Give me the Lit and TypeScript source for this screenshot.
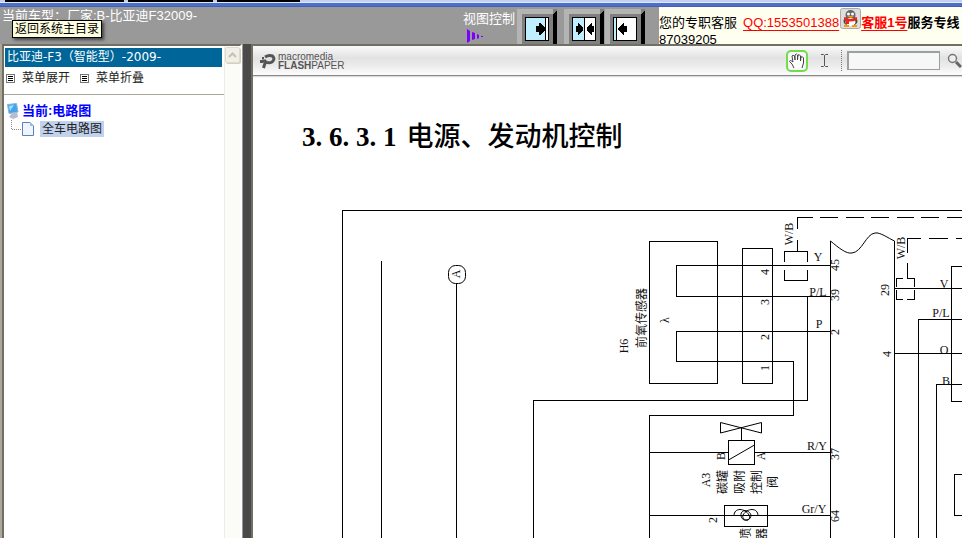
import { LitElement, html, svg, css } from "lit";
import { customElement } from "lit/decorators.js";

@customElement("fp-diagram")
class FpDiagram extends LitElement {
  static styles = css`
    :host { display: block; }
    svg { display: block; overflow: visible; }
    .wire { fill: none; stroke: #000; stroke-width: 1; shape-rendering: crispEdges; }
    .curve { fill: none; stroke: #000; stroke-width: 1; }
    text { font-family: "Liberation Serif", "Noto Sans CJK SC", serif; font-size: 12px; fill: #111; text-anchor: middle; }
    .cn { font-family: "Noto Sans CJK SC", sans-serif; font-size: 12px; }
  `;

  private up(x: number, y: number, label: string, cls = "") {
    return svg`<text class=${cls} transform="translate(${x} ${y}) rotate(-90)">${label}</text>`;
  }

  render() {
    return html`<svg width="709" height="462" viewBox="253 76 709 462" role="img" aria-label="电路图">
      <path class="wire" d="M342.5 538V210.5H962 M381.5 261V538 M456.5 284V538 M533.5 538V400.5H807.5V296
        M649.5 241.5H717.5V383.5H649.5Z M742.5 248.5H772.5V383.5H742.5Z
        M830 265.5H676.5V296.5H830 M830 331.5H676.5V361.5H793.5V415.5H649.5V538
        M797.5 251V240 M797.5 229V217.5H813 M820 217.5H838 M846 217.5H864 M871 217.5H889 M897 217.5H914 M921 217.5H939 M947 217.5H962
        M784.5 262V251.5H807.5V262 M784.5 270V280.5H807.5V270
        M830.5 241V538 M894.5 241V538 M894 288.5H962 M894 353.5H962
        M907.5 278V263 M907.5 253V238.5H921 M929 238.5H948 M956 238.5H962
        M896.5 287V278.5H903 M907 278.5H914.5V287 M896.5 290V299.5H903 M907 299.5H914.5V290
        M962 266.5H951.5V401.5H962 M918.5 538V319.5H962 M936.5 538V384.5H962 M962 474.5H954.5V515.5H962
        M649 452.5H728 M755 452.5H830 M728.5 440.5H754.5V464.5H728.5Z M741.5 440V428
        M649 515.5H830 M724.5 505.5H767.5V526.5H724.5Z" />
      <path class="curve" d="M830.5 241C839 248 846 254 852 253C862 252 866 234 875 233C880 232 888 238 894.5 241
        M720.5 422.5L761.5 433V422.5L720.5 433Z M728.5 460L754.5 445" />
      <path class="curve" stroke-width="1.3" d="M734 516C734 507 745 508 749 515C752 522 742 522 741 516C740 509 749 509 751 515C751 522 741 521 743 515C747 508 758 507 758 516" />
      <rect class="curve" x="448.5" y="265.5" width="17" height="18" rx="7" />
      ${this.up(460, 274, "A")}
      ${this.up(628, 346, "H6")}${this.up(646, 318, "前氧传感器", "cn")}${this.up(669, 320, "λ")}
      ${this.up(769, 272, "4")}${this.up(769, 302, "3")}${this.up(769, 337, "2")}${this.up(769, 368, "1")}
      ${this.up(793, 234, "W/B")}${this.up(905, 248, "W/B")}
      ${this.up(839, 265, "45")}${this.up(839, 295, "39")}${this.up(839, 332, "2")}
      ${this.up(889, 290, "29")}${this.up(891, 354, "4")}
      ${this.up(839, 454, "37")}${this.up(839, 516, "64")}
      ${this.up(725, 456, "B")}${this.up(765, 456, "A")}${this.up(710, 480, "A3")}
      ${this.up(727, 482, "碳罐", "cn")}${this.up(744, 482, "吸附", "cn")}${this.up(761, 482, "控制", "cn")}${this.up(777, 482, "阀", "cn")}
      ${this.up(717, 520, "2")}${this.up(750, 534, "喷", "cn")}${this.up(766, 534, "器", "cn")}
      <text x="818" y="261">Y</text><text x="818" y="296">P/L</text><text x="819" y="328">P</text>
      <text x="944" y="288">V</text><text x="941" y="317">P/L</text><text x="944" y="354">O</text><text x="946" y="385">B</text>
      <text x="817" y="450">R/Y</text><text x="814" y="513">Gr/Y</text>
    </svg>`;
  }
}

@customElement("app-root")
class AppRoot extends LitElement {
  static styles = css`
    :host { display: flex; flex-direction: column; height: 100vh; overflow: hidden; background: #999; font: 12px/16px "Liberation Sans", "Noto Sans CJK SC", sans-serif; color: #000; }
    * { box-sizing: border-box; }
    button { border: 0; padding: 0; background: none; font: inherit; color: inherit; }
    svg { display: block; flex: none; }
    .strip { flex: none; height: 7px; background: linear-gradient(#c4d0f0 0 2px, #e3e9fa 2px 3px, #4c70c8 3px 6px, #3f62b8 6px); position: relative; }
    .tabs { display: flex; gap: 4px; height: 2px; padding-left: 5px; }
    .tabs i { background: #000; }
    .t1 { width: 119px; }
    .t2 { width: 85px; }
    .t3 { width: 83px; }
    .head { flex: none; height: 37px; display: flex; overflow: hidden; background: #999; font-size: 13px; }
    .car { flex: 1; min-width: 0; padding: 1px 0 0 2px; color: #fff; white-space: nowrap; }
    .tip { position: absolute; left: 12px; top: 20px; height: 18px; padding: 0 2px; border: 1px solid #000; background: #ffffe1; box-shadow: 2px 2px 3px #444; white-space: nowrap; z-index: 2; }
    .control { flex: none; width: 54px; color: #fff; padding-top: 4px; white-space: nowrap; }
    .control svg { margin-top: 2px; margin-left: 4px; }
    .views { flex: none; display: flex; gap: 6px; padding-top: 2px; width: 142px; }
    .pair { display: flex; }
    .contact { flex: none; width: 303px; background: #fffff0; overflow: hidden; white-space: nowrap; }
    .line { display: flex; height: 25px; align-items: flex-end; line-height: 18px; }
    .line svg { align-self: flex-start; margin-top: 1px; }
    .line a { color: #f00; text-decoration: underline; text-underline-offset: 3px; }
    .line a:first-of-type { margin: 0 1px 0 6px; }
    .bold { font-weight: bold; }
    .main { flex: 1; min-height: 0; display: flex; background: #aca899; }
    .side { flex: none; width: 240px; margin-left: 2px; display: flex; background: #fff; border: 2px solid #716f64; border-color: #716f64 #fff #fff #716f64; border-bottom: 0; }
    .nav { flex: 1; min-width: 0; }
    .title { margin: 2px 2px 0 1px; height: 19px; line-height: 19px; padding-left: 2px; background: #069; color: #fff; font-family: "DejaVu Sans", "Noto Sans CJK SC", sans-serif; white-space: nowrap; }
    .tools { display: flex; gap: 10px; height: 28px; padding: 3px 2px 0; border-bottom: 1px solid #aca899; color: #222; }
    .tools button { display: flex; gap: 7px; height: 16px; align-items: center; }
    .tree { padding: 7px 3px; }
    .node { display: flex; gap: 3px; height: 18px; align-items: center; font-weight: bold; font-size: 13px; }
    .node a { color: #00f; text-decoration: none; }
    .leaf { display: flex; height: 18px; align-items: center; gap: 6px; }
    .leaf a { background: #c1d2ee; color: #222; padding: 0 2px; text-decoration: none; }
    .scroll { flex: none; width: 16px; background: #fbfbf7; border-left: 1px solid #eeede5; }
    .scroll button { display: flex; align-items: center; justify-content: center; width: 15px; height: 16px; margin-top: 1px; border: 1px solid #dedbcd; border-radius: 2px; background: #f1f0e8; box-shadow: 1px 1px 0 #d3d0c2; }
    .divider { flex: none; width: 9px; background: #4a4a4a; border-left: 1px solid #999; }
    .paper { flex: 1; min-width: 0; background: #fff; border: solid #716f64; border-width: 2px 0 0 2px; overflow: hidden; }
    .bar { display: flex; align-items: center; height: 30px; padding-left: 7px; background: linear-gradient(#fafafa, #e2e2e2 12px, #ececec 20px, #fdfdfd); border-bottom: 1px solid #888; box-shadow: 0 1px 1px #ddd; }
    .brand { margin-left: 2px; color: #555; line-height: 9px; flex: 1; font-size: 10px; font-family: "Liberation Sans", sans-serif; white-space: nowrap; }
    .hand { width: 22px; height: 22px; border: 2px solid #72dc4a; border-radius: 5px; background: #f7f7f7; display: flex; justify-content: center; align-items: center; }
    .cursor { margin: 0 12px; }
    .dots { border-left: 1px dotted #777; height: 21px; margin-right: 5px; }
    input { width: 93px; height: 19px; border: 2px solid #99a0a0; border-right-width: 1px; border-bottom-width: 1px; background: #f7f7f7; padding: 0 3px; margin-right: 7px; }
    .page { display: grid; }
    .page h1, .page fp-diagram { grid-area: 1 / 1; }
    h1 { margin: 0; padding: 44px 0 0 49px; font: 500 27px/34px "Liberation Serif", "Noto Sans CJK SC", serif; white-space: nowrap; display: flex; gap: 10px; align-self: start; }
    .num { font-weight: bold; font-size: 27px; }
  `;

  private view(kind: string) {
    const split = kind === "right" ? 20 : kind === "both" ? 12 : 3;
    return html`<button aria-label=${kind}><svg width="41" height="36" viewBox="0 0 41 36" shape-rendering="crispEdges">
      <path fill="#b4b4b4" d="M0 0H40V36H0Z" /><path fill="#808080" d="M5 5H36V36H5Z" />
      <path fill="#000" d="M36 5L40 1V36H36Z" /><path fill="#808080" d="M36 0H40V1L36 5Z" />
      <path fill="#fff" stroke="#000" d="M8.5 8.5H31.5V31.5H8.5Z" /><path fill="#bfefff" d="M9 9H${9 + split - 1}V31H9Z" />
      <path stroke="#000" d="M${8.5 + split} 9V31" />
      ${kind === "right" ? svg`<path d="M19 17H22V14H23L28 19V21L23 26H22V23H19Z" />` : kind === "both" ? svg`<path d="M12 17H14V14H15L19 19V21L15 26H14V23H12Z M30 17H28V14H27L23 19V21L27 26H28V23H30Z" />` : svg`<path d="M22 17H19V14H18L13 19V21L18 26H19V23H22Z" />`}
    </svg></button>`;
  }

  render() {
    const box = html`<svg width="9" height="9" viewBox="0 0 9 9" shape-rendering="crispEdges"><path fill="#fff" stroke="#777" d="M.5 .5H8.5V8.5H.5Z" /><path stroke="#000" d="M2 2.5H7M2 4.5H7M2 6.5H7" /></svg>`;
    return html`
      <div class="strip"><div class="tabs"><i class="t1"></i><i class="t2"></i><i class="t3"></i></div><div class="tip">返回系统主目录</div></div>
      <header class="head">
        <div class="car">当前车型：厂家:B-比亚迪F32009-</div>
        <div class="control">视图控制<svg width="18" height="14" viewBox="0 0 18 14"><path fill="#7d00ff" d="M0 0L3 2V12L0 14Z M5 3L8 4V10L5 11Z M10 5L12 6V9L10 10Z M14 7H16V8H14Z" /></svg></div>
        <div class="views">${this.view("right")}<div class="pair">${this.view("both")}${this.view("left")}</div></div>
        <div class="contact">
          <div class="line"><span>您的专职客服</span><a href="#">QQ:1553501388</a>
            <svg width="21" height="21" viewBox="0 0 21 21"><rect x=".5" y=".5" width="20" height="20" rx="2" fill="#ddd" stroke="#aaa" /><ellipse cx="10.5" cy="13" rx="7" ry="5" fill="#444" /><circle cx="10.5" cy="7" r="5" fill="#666" /><ellipse cx="10.5" cy="14" rx="5" ry="4" fill="#fff" /><path fill="#e22" d="M4 9Q10 13 17 9V12Q10 15 4 12Z M6 12H9V16H6Z" /><circle cx="8.5" cy="6" r="1.5" fill="#fff" /><circle cx="12.5" cy="6" r="1.5" fill="#fff" /><path fill="#f90" d="M7 8H14L11 10Z M4 17H9V19H4Z M12 17H17V19H12Z" /></svg><a class="bold" href="#">客服1号</a><span class="bold">服务专线</span>
          </div>
          <div>87039205</div>
        </div>
      </header>
      <main class="main">
        <aside class="side">
          <nav class="nav">
            <div class="title">比亚迪-F3（智能型）-2009-</div>
            <div class="tools"><button>${box}菜单展开</button><button>${box}菜单折叠</button></div>
            <div class="tree">
              <div class="node"><svg width="12" height="16" viewBox="0 0 12 16"><path fill="#4aa3ea" stroke="#86b4e4" d="M.5 1.5L9.5 .5L11 9L2 10.5Z" /><path fill="#9be0ff" d="M2 3L7 2L3 8Z" /><path fill="#b8bccb" d="M5 10L10 9L11 14L6 16L2 14Z" /></svg><a href="#">当前:电路图</a></div>
              <div class="leaf"><svg width="27" height="18" viewBox="0 0 27 18"><path fill="none" stroke="#888" stroke-dasharray="1 1" d="M4.5 0V9.5H15" /><path fill="#eef5ff" stroke="#5b7fc0" d="M15.5 2.5H23L26.5 6V15.5H15.5Z" /><path fill="#9db9e8" d="M23 2L27 6H23Z" /></svg><a href="#">全车电路图</a></div>
            </div>
          </nav>
          <div class="scroll"><button aria-label="向上"><svg width="9" height="6" viewBox="0 0 9 6"><path fill="none" stroke="#c3c1b5" stroke-width="2" d="M1 5L4.5 1.5L8 5" /></svg></button></div>
        </aside>
        <div class="divider"></div>
        <section class="paper">
          <div class="bar">
            <svg width="16" height="16" viewBox="0 0 16 16"><path fill="none" stroke="#555" stroke-width="3" d="M3.5 15L6 7M5 4Q9 1.500 12.500 3Q15.500 6 12 9Q9 10.500 6 9M2 8H6" /><path fill="#555" d="M0 7H3V10H0Z M2 4H4V6H2Z" /></svg>
            <div class="brand"><div>macromedia</div><div><b>FLASH</b>PAPER</div></div>
            <button class="hand" aria-label="移动"><svg width="18" height="18" viewBox="0 0 18 18"><path fill="#fff" stroke="#444" d="M6 16L4 12L1.500 9.500Q2 7.500 5 10L4 4Q5 2.500 6.500 4L7 8V3Q8.500 1 9.500 3V8L10 3Q11.500 2 12.500 4V9L13 5Q14.500 4 15.500 6V11L14 16" /></svg></button>
            <svg class="cursor" width="9" height="15" viewBox="0 0 9 15"><path fill="none" stroke="#555" d="M1 1.500H3.500L4.500 2.500L5.500 1.500H8M4.500 2V13M1 13.500H3.500L4.500 12.500L5.500 13.500H8" /></svg>
            <span class="dots"></span>
            <input aria-label="查找" />
            <svg width="15" height="15" viewBox="0 0 15 15"><circle cx="5.500" cy="5.500" r="4" fill="#eee" stroke="#777" stroke-width="1.500" /><path stroke="#666" stroke-width="3" d="M9 9L14 14" /></svg>
          </div>
          <div class="page"><h1><span class="num">3. 6. 3. 1</span><span>电源、发动机控制</span></h1><fp-diagram></fp-diagram></div>
        </section>
      </main>`;
  }
}
